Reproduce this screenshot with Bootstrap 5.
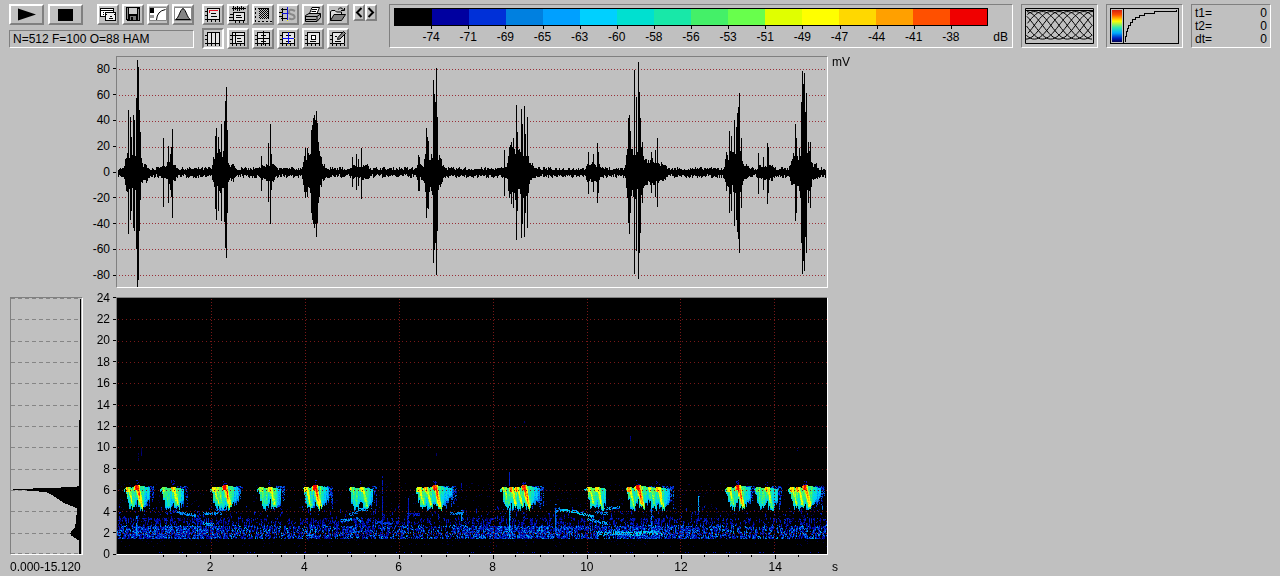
<!DOCTYPE html>
<html lang="en">
<head>
<meta charset="utf-8">
<meta name="viewport" content="width=device-width, initial-scale=1">
<title>Spectrogram</title>
<link href="https://cdn.jsdelivr.net/npm/bootstrap@5.3.0/dist/css/bootstrap.min.css" rel="stylesheet">
<style>
  body { background: #c0c0c0; color: #000; font: 12px/16px "Liberation Sans", Arial, sans-serif; }
  canvas, svg { display: block; }
  .toolbar { padding: 4px 9px 0; height: 52px; }
  .bevel { background: #c0c0c0; border: 2px solid; border-color: #fff #808080 #808080 #fff; padding: 0; color: #000; display: flex; align-items: center; justify-content: center; }
  .bevel.active { border-color: #808080 #fff #fff #808080; background: #c8c8c8; }
  .transport { width: 35px; height: 21px; }
  .tool { width: 22px; height: 21px; }
  .step { width: 12px; height: 17px; }
  .sunken { border: 1px solid; border-color: #808080 #fff #fff #808080; }
  .tool-gap { gap: 3px; }
  .status { width: 185px; height: 18px; padding: 0 3px; background: none; border-radius: 0; font: inherit; color: inherit; }
  .scale-box { min-width: 0; padding: 3px 4px; margin-left: 12px; }
  .scale-bar { height: 18px; border: 1px solid #000; }
  .scale-labels { margin-left: 3.125%; width: 93.75%; }
  .scale-labels li { flex: 1 1 0; text-align: center; padding-top: 3px; position: relative; }
  .scale-labels li::before { content: ""; position: absolute; left: 50%; top: 0; width: 1px; height: 3px; background: #000; }
  .unit { width: 20px; padding-top: 21px; text-align: right; }
  .preview { padding: 3px; }
  .times { width: 80px; padding: 2px 3px; line-height: 13px; }
  .charts { display: grid; grid-template-columns: 73px 33px minmax(0, 712fr) 452fr; padding: 4px 0 0 10px; }
  .charts canvas { width: 100%; }
  .wave-row { margin-bottom: 9px; }
  .axis-y li { flex: 1 1 0; min-height: 0; display: flex; align-items: center; justify-content: flex-end; gap: 3px; }
  .axis-y li::after { content: ""; width: 3px; height: 1px; background: #000; }
  .spec-axis { margin: -10px 0; }
  .right-unit { padding-left: 4px; line-height: 12px; }
  .axis-x li { flex: none; text-align: center; padding-top: 4px; position: relative; }
  .axis-x li:not(:first-child)::before { content: ""; position: absolute; left: 50%; top: 0; width: 1px; height: 4px; background: #000; }
  .axis-x li:not(:first-child)::after { content: ""; position: absolute; left: 0; right: 0; top: 0; height: 2px; background: linear-gradient(#000, #000) 0 0 / 1px 2px no-repeat, linear-gradient(#000, #000) 25% 0 / 1px 2px no-repeat, linear-gradient(#000, #000) 75% 0 / 1px 2px no-repeat; }
  .caption-row { padding-top: 4px; line-height: 16px; white-space: nowrap; }
</style>
</head>
<body>
<svg width="0" height="0" class="position-absolute" aria-hidden="true">
  <symbol id="frame" viewBox="0 0 18 17">
    <path d="M3.5 2.5H15.5V13.5H3.5Z" fill="#e4e4e4" stroke="#000"/>
    <path d="M1 5.5H3M1 9.5H3M1 13.5H3M3.5 14V16M7.5 14V16M11.5 14V16M15.5 14V16" stroke="#000"/>
  </symbol>
</svg>

<header class="toolbar d-flex">
  <div class="d-flex flex-column justify-content-between pb-1">
    <div class="d-flex">
      <button class="bevel transport" aria-label="Play"><svg width="22" height="15"><path d="M2 1.5 20 7.5 2 13.5Z"/></svg></button>
      <button class="bevel transport ms-1" aria-label="Stop"><svg width="15" height="12"><path d="M0 0H15V12H0Z"/></svg></button>
      <div class="d-flex tool-gap ms-auto">
        <button class="bevel tool" aria-label="Copy window"><svg width="18" height="17" fill="none" stroke="#000" shape-rendering="crispEdges"><path d="M1.5 2.5H14.5V10.5H1.5Z" fill="#fff"/><path d="M2 4.5H14M3.5 6.5H5M3.5 8.5H5"/><path d="M6.5 6.5H16.5V14.5H6.5Z" fill="#eee"/><path d="M7 8.5H8M15 8.5H16M9.5 12.5H14M10.5 10.5H13"/></svg></button>
        <button class="bevel tool" aria-label="Save"><svg width="18" height="17" shape-rendering="crispEdges"><path d="M2 1H16V15H3L2 14Z"/><path d="M3 2H4V13H3ZM14 3H15V14H14Z" fill="#888"/><path d="M5 2H13V8H5Z" fill="#ccc"/><path d="M6 10H12V14H6Z" fill="#777"/><path d="M7 11H9V14H7Z"/></svg></button>
        <button class="bevel tool" aria-label="Transfer curve"><svg width="18" height="17" fill="none" stroke="#000"><path d="M.5 1.5H17.5V14.5H.5Z" fill="#fff" stroke="#888"/><path d="M1 2H5V7H1Z" fill="#000" stroke="none"/><path d="M1 9H5V12H1Z" fill="#999" stroke="none"/><path d="M7.5 14Q8 5 16.5 3.5"/></svg></button>
        <button class="bevel tool" aria-label="Spectrum"><svg width="18" height="17" stroke="#000"><path d="M.5 1.5H17.5V14.5H.5Z" fill="#fff" stroke="#888"/><path d="M1.5 13.5C5 12 6 3.5 9 2.500C12 3.5 13 12 16.5 13.5Z" fill="#858585"/></svg></button>
      </div>
    </div>
    <input class="sunken status" aria-label="Analysis settings" value="N=512 F=100 O=88 HAM" readonly>
  </div>

  <div class="d-flex flex-column ms-2 tool-gap">
    <div class="d-flex tool-gap">
      <button class="bevel tool" aria-label="Set range"><svg width="18" height="17" fill="none" stroke="#000" shape-rendering="crispEdges"><use href="#frame"/><path d="M5 4.5H14M5.5 4V7" stroke="#e01020"/><path d="M7 7.5H12M7 10.5H13"/></svg></button>
      <button class="bevel tool" aria-label="Waveform"><svg width="18" height="17" fill="none" stroke="#000" shape-rendering="crispEdges"><path d="M4.5 6.5H15.5V14.5H4.5Z" fill="#e4e4e4"/><path d="M3 2.5H17M4.5 0V5M6.5 1V4M8.5 0V5M10.5 1V5M12.5 0V4M14.5 1V4M1 8.5H4M0 11.5H4M0 14.5H4M7 9.5H12M7 11.5H13M6.5 15V17M10.5 15V17M14.5 15V17"/></svg></button>
      <button class="bevel tool" aria-label="Select section"><svg width="18" height="17" fill="none" stroke="#000" shape-rendering="crispEdges"><defs><pattern id="chk" width="2" height="2" patternUnits="userSpaceOnUse"><path d="M0 0H1V1H0ZM1 1H2V2H1Z" fill="#000" stroke="none"/></pattern></defs><path d="M5 3H14V13H5Z" fill="url(#chk)" stroke="none"/><path d="M1.5 1.5V15.5H17.5" stroke-dasharray="2 2"/><path d="M4 2.5H14.5V12.5"/></svg></button>
      <button class="bevel tool" aria-label="Scroll spectrogram"><svg width="18" height="17" fill="none" stroke="#000" shape-rendering="crispEdges"><path d="M2 3.5H8M2 12.5H8M3.5 2V15M0 6.5H3M0 10.5H3"/><path d="M8.5 1V15M3 7.5H10" stroke="#1010e0"/><path d="M8 14.5H9M1 7.5H2" stroke="#ee0"/><path d="M16 5Q10 2 10 6 10 8 13 8.5 16 9 15.5 12 14 14 10 12.5" stroke="#888" stroke-width="2" shape-rendering="auto"/></svg></button>
      <button class="bevel tool" aria-label="Print"><svg width="18" height="17" fill="none" stroke="#000"><path d="M5.5 7.5 8 1.5H15.5L13 7.5Z" fill="#fff"/><path d="M8 3.5H13M7.5 5.5H12"/><path d="M1.5 9.5 5 7.5H16.5V11.5L13 15.5H1.5Z" fill="#aaa"/><path d="M1.5 10.5H13L16.5 8M13 10.5V15M2 13.5H12"/></svg></button>
      <button class="bevel tool" aria-label="Open"><svg width="18" height="17" fill="none" stroke="#000"><path d="M1.5 14.5V5.5L3 4.5H6L7.5 6H12.5V8.5" fill="#ddd"/><path d="M1.5 14.5 5 8.5H16.5L12.5 14.5Z" fill="#808080"/><path d="M9 3.5Q12 0 14.5 4M12 4.5H15.5V2"/></svg></button>
    </div>
    <div class="d-flex tool-gap">
      <button class="bevel tool active" aria-label="Time markers" aria-pressed="true"><svg width="18" height="17" fill="none" stroke="#000" shape-rendering="crispEdges"><use href="#frame"/><path d="M7.5 3V14M11.5 3V14"/></svg></button>
      <button class="bevel tool" aria-label="Frequency markers"><svg width="18" height="17" fill="none" stroke="#000" shape-rendering="crispEdges"><use href="#frame"/><path d="M6.5 3V14M3 5.5H16M8 8.5H12M8 11.5H13"/></svg></button>
      <button class="bevel tool" aria-label="Cross cursor"><svg width="18" height="17" fill="none" stroke="#000" shape-rendering="crispEdges"><use href="#frame"/><path d="M9.5 1V15M3 8.5H16M7 5.5H12M7 11.5H12"/></svg></button>
      <button class="bevel tool" aria-label="Colour cross cursor"><svg width="18" height="17" fill="none" stroke="#000" shape-rendering="crispEdges"><use href="#frame"/><path d="M7 5.5H12M7 11.5H12"/><path d="M9.5 1V15M3 8.5H16" stroke="#1010f0"/><path d="M9 1.5H10M9 14.5H10M2 8.5H3M15 8.5H16" stroke="#ee0"/></svg></button>
      <button class="bevel tool" aria-label="Box marker"><svg width="18" height="17" fill="none" stroke="#000" shape-rendering="crispEdges"><use href="#frame"/><path d="M7.5 5.5H11.5V9.5H7.5Z" fill="#fff"/><path d="M6 11.5H12"/></svg></button>
      <button class="bevel tool" aria-label="Edit label"><svg width="18" height="17" fill="none" stroke="#000"><use href="#frame"/><path d="M6 11.5H12M6 6.5H8"/><path d="M8.5 9.5 9 7.5 14.5 1.5 16.5 3.5 11 9Z" fill="#888"/></svg></button>
    </div>
  </div>
  <div class="d-flex ms-1">
    <button class="bevel step" aria-label="Previous"><svg width="8" height="11" fill="none" stroke="#000" stroke-width="2"><path d="M6.5 1 2 5.5 6.5 10"/></svg></button>
    <button class="bevel step" aria-label="Next"><svg width="8" height="11" fill="none" stroke="#000" stroke-width="2"><path d="M1.5 1 6 5.5 1.5 10"/></svg></button>
  </div>

  <div class="sunken scale-box flex-grow-1 d-flex mb-1">
    <div class="flex-grow-1">
      <div class="scale-bar d-flex" id="scaleBar"></div>
      <ul class="scale-labels list-unstyled d-flex mb-0" id="scaleLabels"></ul>
    </div>
    <div class="unit">dB</div>
  </div>

  <div class="sunken preview ms-2 mb-1">
    <svg width="69" height="36" fill="none" stroke="#000" role="img" aria-label="Window overlap"><path d="M.5.5H68.5V35.5H.5Z"/><path d="M1 2.5H68"/><path id="windows"/></svg>
  </div>
  <div class="sunken preview ms-2 mb-1">
    <svg width="69" height="36" fill="none" stroke="#000" shape-rendering="crispEdges" role="img" aria-label="Colour curve">
      <defs><linearGradient id="heat" x2="0" y2="1"><stop offset="0" stop-color="#d02010"/><stop offset=".15" stop-color="#ff5000"/><stop offset=".35" stop-color="#ff0"/><stop offset=".55" stop-color="#30e8b0"/><stop offset=".72" stop-color="#00a8ff"/><stop offset=".88" stop-color="#0020c0"/><stop offset="1" stop-color="#000050"/></linearGradient></defs>
      <path d="M.5.5H68.5V35.5H.5Z"/><path d="M2 2H12V34H2Z" fill="url(#heat)" stroke="none"/><path d="M13.5 1V35"/>
      <path d="M15.5 34V28.5H16.5V23.5H17.5V20.5H18.5V17.5H20.5V14.5H22.5V11.5H25.5V9.5H29.5V7.5H34.5V5.5H44.5V3.5H66.5V2"/>
    </svg>
  </div>
  <dl class="sunken times d-flex flex-column ms-2 mb-1">
    <div class="d-flex justify-content-between"><dt class="fw-normal">t1=</dt><dd class="m-0">0</dd></div>
    <div class="d-flex justify-content-between"><dt class="fw-normal">t2=</dt><dd class="m-0">0</dd></div>
    <div class="d-flex justify-content-between"><dt class="fw-normal">dt=</dt><dd class="m-0">0</dd></div>
  </dl>
</header>

<main>
  <div class="charts">
    <div></div>
    <ul class="axis-y wave-row list-unstyled d-flex flex-column" id="waveAxis"></ul>
    <div class="sunken wave-row"><canvas id="wave" width="710" height="230" role="img" aria-label="Waveform"></canvas></div>
    <div class="wave-row right-unit">mV</div>
  </div>
  <div class="charts pt-0">
    <div class="sunken"><canvas id="mean" width="71" height="256" role="img" aria-label="Mean spectrum"></canvas></div>
    <ul class="axis-y spec-axis list-unstyled d-flex flex-column" id="specAxis"></ul>
    <div class="sunken"><canvas id="spec" width="710" height="256" role="img" aria-label="Spectrogram"></canvas></div>
    <div></div>
  </div>
  <div class="charts pt-0">
    <div class="caption-row">0.000-15.120</div>
    <div></div>
    <ul class="axis-x list-unstyled d-flex mb-0" id="timeAxis"></ul>
    <div class="right-unit caption-row">s</div>
  </div>
</main>

<script src="https://cdn.jsdelivr.net/npm/bootstrap@5.3.0/dist/js/bootstrap.bundle.min.js"></script>
<script>
const byId = id => document.getElementById(id);
const colours = ['#000000','#0000a0','#0030d8','#0080e0','#00a0ff','#00d0ff','#00e0d0','#18e8a8','#44f068','#68ff4c','#e0ff00','#ffff00','#ffd800','#ffa000','#ff5000','#f00000'];
byId('scaleBar').innerHTML = colours.map(c => `<div class="flex-fill" style="background:${c}"></div>`).join('');
byId('scaleLabels').innerHTML = [74,71,69,65,63,60,58,56,53,51,49,47,44,41,38].map(v => `<li>-${v}</li>`).join('');
byId('waveAxis').innerHTML = [80,60,40,20,0,-20,-40,-60,-80].map(v => `<li>${v}</li>`).join('');
byId('specAxis').innerHTML = Array.from({length: 13}, (_, i) => `<li>${24 - 2 * i}</li>`).join('');
const duration = 15.12;
byId('timeAxis').innerHTML = `<li style="width:${100 / duration}%"></li>` + [2,4,6,8,10,12,14].map(t => `<li style="width:${200 / duration}%">${t}</li>`).join('');

let seed = 7;
const rnd = () => (seed = (seed * 16807) % 2147483647) / 2147483647;

// Overlapping Hamming windows
let d = '';
for (let k = -8; k <= 8; k++) {
  let pen = 'M';
  for (let t = 0; t <= 66; t += 2) {
    const x = 1 + k * 8.25 + t;
    if (x < 1 || x > 68) continue;
    d += pen + x.toFixed(1) + ' ' + (33.5 - 30 * (0.54 - 0.46 * Math.cos(2 * Math.PI * t / 66))).toFixed(1);
    pen = 'L';
  }
}
byId('windows').setAttribute('d', d);

// Waveform: body = [start, end, amplitude], spike = [column, up, down]
const bodies = [[9,23,21],[23,30,9],[44,50,6],[50,58,10],[97,110,21],[110,117,8],[143,149,7],[149,157,9],[187,192,19],[193,203,24],[203,208,8],[235,252,7],[300,306,7],[308,323,20],[323,327,8],[386,391,6],[392,411,26],[411,415,10],[470,482,9],[510,525,25],[526,538,14],[538,548,9],[609,625,20],[625,630,9],[642,656,7],[674,682,17],[682,693,24],[693,700,8]];
const spikes = [[11,62,61],[13,55,47],[14,35,38],[16,57,55],[17,52,58],[19,74,76],[20,112,114],[21,105,107],[22,62,58],[23,40,27],[46,34,34],[51,26,30],[53,18,17],[55,43,45],[54,25,24],[98,36,36],[99,44,47],[101,35,38],[104,48,48],[107,51,49],[108,71,75],[109,85,85],[110,42,40],[144,16,18],[151,29,29],[153,48,51],[154,18,17],[188,24,25],[190,24,24],[194,42,40],[195,47,47],[196,54,51],[197,57,55],[198,52,51],[199,61,64],[200,49,50],[201,30,30],[235,15,14],[239,18,17],[241,13,13],[244,24,26],[301,17,18],[302,15,18],[309,44,45],[310,35,35],[311,31,36],[316,92,90],[317,78,77],[318,70,70],[319,104,102],[320,55,58],[387,22,23],[392,25,25],[394,30,31],[396,34,35],[399,67,67],[400,40,38],[404,63,65],[405,48,51],[407,66,64],[408,38,40],[410,55,55],[471,20,21],[476,18,19],[480,29,30],[481,20,20],[511,54,50],[512,57,61],[513,41,40],[517,102,101],[519,75,78],[521,110,106],[522,80,80],[523,54,60],[525,30,30],[534,20,20],[538,22,24],[540,34,34],[612,41,40],[614,36,38],[617,52,53],[619,45,47],[620,59,59],[621,65,66],[622,79,80],[624,34,35],[641,19,21],[646,15,17],[650,29,31],[651,25,20],[678,48,48],[679,34,40],[684,70,70],[685,101,101],[686,88,88],[687,99,98],[688,60,64],[689,79,80],[691,30,30],[693,30,35]];
const wv = byId('wave').getContext('2d');
wv.fillStyle = '#983038';
for (const y of [12,38,64,90,140,166,192,218]) for (let x = 2; x < 708; x += 3) wv.fillRect(x, y, 1, 1);
wv.fillStyle = '#000';
for (let x = 1; x < 709; x++) {
  let up = 1.5 + rnd() * 3.5, dn = 1.5 + rnd() * 3.5;
  for (const [a, b, h] of bodies) if (x >= a - 2 && x <= b + 3) {
    const edge = Math.min(1, (x - a + 3) / 3, (b + 4 - x) / 5);
    up = Math.max(up, h * edge * (.6 + rnd() * .5));
    dn = Math.max(dn, h * edge * (.6 + rnd() * .5));
  }
  for (const s of spikes) if (s[0] === x) { up = Math.max(up, s[1]); dn = Math.max(dn, s[2]); }
  wv.fillRect(x, Math.round(115 - up), 1, Math.round(up + dn) + 1);
}

// Mean spectrum profile
const mn = byId('mean').getContext('2d');
mn.fillStyle = '#858585';
for (let i = 0; i <= 12; i++) {
  const y = Math.min(255, Math.round(i * 256 / 12));
  for (let x = 0; x < 69; x += 7) mn.fillRect(x, y, 4, 1);
}
mn.fillStyle = '#000';
mn.fillRect(69, 1, 1, 255);
mn.fillRect(68, 122, 1, 134);
const profile = [[187,68],[188,66],[189,50],[190,22],[191,2],[192,16],[193,28],[194,36],[196,40],[199,45],[202,49],[205,54],[208,62],[210,66],[222,65],[229,64],[232,61],[235,59],[237,60],[239,63],[241,66],[242,68]];
for (let i = 0; i < profile.length - 1; i++) {
  const [y0, x0] = profile[i], [y1, x1] = profile[i + 1];
  for (let y = y0; y < y1; y++) { const x = Math.round(x0 + (x1 - x0) * (y - y0) / (y1 - y0)); mn.fillRect(x, y, 70 - x, 1); }
}

// Spectrogram: level grid 0..15 mapped to the colour scale
const W = 710, H = 256, level = new Float32Array(W * H);
const put = (x, y, v) => { x = Math.round(x); y = Math.round(y); if (x >= 0 && x < W && y >= 0 && y < H) level[y * W + x] = Math.max(level[y * W + x], v); };
for (let x = 0; x < W; x++) {
  const gain = .85 + .3 * Math.sin(x / 37) * Math.sin(x / 91 + 1);
  const top = 212 + rnd() * 18;
  let run = 1;
  for (let y = 208; y < 241; y++) {
    if (rnd() < .5) run = rnd();
    const p = y > 227 ? .75 : y > 219 ? .38 : y > top ? .17 : .03;
    if (run < p * gain + .02) put(x, y, y > 226 ? .7 + rnd() * rnd() * 4.7 : .4 + rnd() * 1.6);
  }
  for (let y = 185; y < 249; y++) if (rnd() < .025) put(x, y, .45);
}
// chirp = [column, strength, tail length]
const chirps = [[10,11.5,9],[19,15,13],[46,9,9],[55,12,11],[96,11.5,9],[100,10,9],[107,15.5,14],[143,9.5,9],[152,12,11],[188,12,9],[197,15.5,14],[234,9.5,9],[244,12,11],[301,11.5,9],[308,13,9],[317,15.5,18],[386,10,9],[393,13,9],[399,13,9],[406,15.5,16],[471,11,9],[479,12,9],[511,12.5,9],[520,15.5,13],[532,10.5,9],[540,13,12],[611,11.5,9],[620,15.5,13],[640,9,9],[649,12,11],[674,11.5,9],[680,12.5,9],[687,15.5,16]];
for (const [cx, amp, tail] of chirps) {
  const short = tail === 9;
  for (let x = cx - 4; x <= cx + tail; x++) {
    const u = x - cx, col = rnd();
    const roof = (amp > 14 ? 187 : 189) + Math.round(Math.max(0, Math.abs(u) - 1) * (u < 0 ? .8 : .2));
    const floor = (u < 0 ? 200 + u * 2 : u < 2 ? 206 : u < 8 ? 213 : 210 - (u - 8) * .7) - col * 6;
    for (let y = roof; y < floor; y++) {
      const f = (y - 188) / 22;
      const ridge = Math.exp(-Math.pow((u - 1 - f * 5) / (short ? 2.6 : 3.2), 2));
      const cap = y < roof + 5 ? Math.exp(-Math.pow(u / 4.5, 2)) : 0;
      const fade = u > 6 ? 1 - (u - 6) / (tail * 1.3) : 1;
      let v = Math.max(amp * cap, amp * ridge * (.95 - f * .2), (8 - f * 2) * fade) + (rnd() - .5) * 2 + (col - .5) * 2.4;
      if (y > floor - 2) v *= .7;
      put(x, y, v);
    }
  }
  if (tail > 9) for (let x = cx + 5; x < cx + tail + 5; x++) {
    const low = 192 + rnd() * 20;
    for (let y = 188; y < low; y++) if (rnd() < .6) put(x, y, .6 + rnd() * 2.6);
  }
  if (tail > 9) for (let x = cx - 1; x < cx + 3; x++) for (let y = 182; y < 188; y++) if (rnd() < .25) put(x, y, 1.2);
}
// faint whistles: [x0, y0, x1, y1, level]
const lines = [[48,214,60,213,2],[60,214,78,217,4.5],[78,220,86,224,2],[86,225,96,226,5],[86,215,104,215,4.5],[98,211,108,211,3],[223,222,234,221,5],[232,216,240,214,4],[239,219,243,223,4],[241,211,250,211,5],[258,224,275,225,3],[290,216,302,216,2],[333,215,346,215,4],[438,214,442,210,4.5],[442,212,460,213,6],[460,214,476,218,6],[470,221,490,225,5],[478,214,490,215,4],[485,210,502,209,5],[495,235,540,234,6]];
for (const [x0, y0, x1, y1, v] of lines) for (let x = x0; x <= x1; x++) {
  const y = y0 + (y1 - y0) * (x - x0) / (x1 - x0);
  for (let k = -1; k < 2; k++) if (rnd() < .65) put(x, y + k, v * (.5 + rnd() * .5));
}
for (const [x, y0, y1, v] of [[19,218,240,4.5],[265,178,240,1.8],[291,200,236,2],[344,185,192,1.5],[344,212,223,5],[392,174,188,2],[392,210,239,5.5],[438,206,236,3.5],[534,205,234,4],[581,198,214,5],[581,214,222,2],[21,155,164,.8],[24,150,158,.8],[13,139,145,.8],[398,127,130,.8],[513,137,144,1],[311,145,148,.8],[319,152,158,.8],[407,123,125,.8],[680,150,154,.8]])
  for (let y = y0; y < y1; y++) { if (rnd() < .85) put(x, y, v * (.6 + rnd() * .4)); if (v > 3 && rnd() < .35) put(x + 1, y, v * .5); }
for (let x = 480; x < 545; x++) for (let y = 233; y < 238; y++) if (rnd() < .4) put(x, y, 2 + rnd() * 4);
for (let x = 0; x < W; x++) if (rnd() < .08) put(x, 254, 1.5);

const sp = byId('spec').getContext('2d');
const img = sp.createImageData(W, H);
const rgb = colours.map(c => [1, 3, 5].map(i => parseInt(c.substr(i, 2), 16)));
for (let i = 0; i < W * H; i++) {
  const v = Math.min(14.99, Math.max(0, level[i])), a = Math.floor(v), t = v - a;
  for (let k = 0; k < 3; k++) img.data[i * 4 + k] = rgb[a][k] * (1 - t) + rgb[a + 1][k] * t;
  img.data[i * 4 + 3] = 255;
}
sp.putImageData(img, 0, 0);
sp.fillStyle = '#781818';
for (let i = 1; i < 12; i++) { const y = Math.round(i * 256 / 12); for (let x = 1; x < W; x += 4) sp.fillRect(x, y, 1, 1); }
for (let t = 2; t < duration; t += 2) { const x = Math.round(t / duration * W); for (let y = 1; y < H; y += 3) sp.fillRect(x, y, 1, 1); }
</script>
</body>
</html>
